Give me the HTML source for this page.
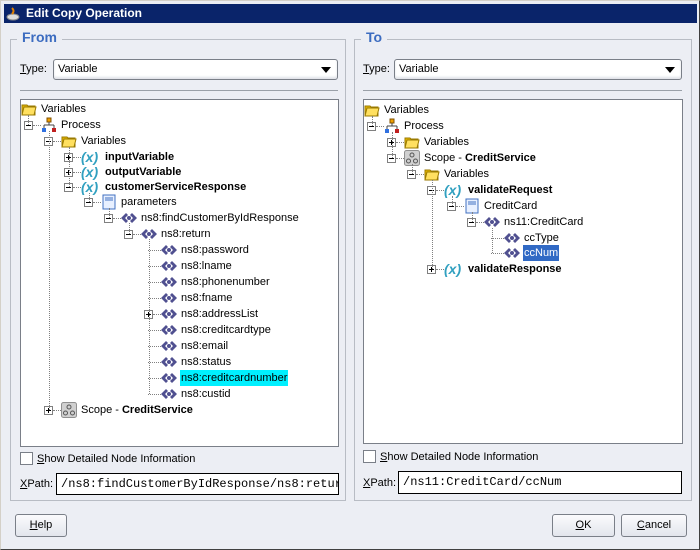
<!DOCTYPE html>
<html><head><meta charset="utf-8"><style>
*{box-sizing:border-box}
body{margin:0;width:700px;height:550px;overflow:hidden;background:#808080;font-family:"Liberation Sans",sans-serif;font-size:11px;color:#000}
#win{position:absolute;left:0;top:0;width:700px;height:550px;background:#eceef4;border:1px solid #d4d0c8;border-right-color:#404040;border-bottom-color:#404040}
#title{position:absolute;left:3px;top:3px;width:693px;height:19px;background:#0a246a;color:#fff;font-weight:bold;font-size:12px;line-height:19px;padding-left:22px}
.grp{position:absolute;border:1px solid #b8bcc4}
.gt{position:absolute;background:#eceef4;color:#3c6cc0;font-weight:bold;font-size:14px;padding:0 5px;top:-11px;left:6px}
.lbl{position:absolute}
.combo{position:absolute;height:21px;background:#fff;border:1px solid #7a7f88;border-radius:3px;padding-left:4px;line-height:19px;box-shadow:inset 0 -2px 2px #e0e2e8}
.combo:after{content:"";position:absolute;right:6px;top:7px;border:5px solid transparent;border-top:6px solid #000}
.sep{position:absolute;height:1px;background:#9aa0a8}
.tree{position:absolute;background:#fff;border:1px solid #7a7f88}
.row{position:absolute;height:16px;line-height:16px;white-space:nowrap}
.row svg{position:absolute;left:0;top:0}
.row span{position:absolute;left:19px;top:0;padding:0 1px}
.exp{position:absolute;width:9px;height:9px;border:1px solid #808080;background:#fff;font-size:9px}
.exp:before{content:"";position:absolute;left:1px;top:3px;width:5px;height:1px;background:#000}
.exp.p:after{content:"";position:absolute;left:3px;top:1px;width:1px;height:5px;background:#000}
.hd{position:absolute;border-top:1px dotted #808080;height:0}
.vd{position:absolute;border-left:1px dotted #808080;width:0}
.cb{position:absolute;width:13px;height:13px;background:#fff;border:1px solid #7a7f88}
.field{position:absolute;background:#fff;border:1px solid #000;font-family:"Liberation Mono",monospace;font-size:12px;line-height:20px;padding-left:4px;overflow:hidden;white-space:nowrap}
.btn{position:absolute;height:23px;border:1px solid #7a7f88;border-radius:3px;background:linear-gradient(#fbfbfd,#e2e5ec);text-align:center;line-height:21px}
u{text-decoration:underline}
</style></head><body>
<svg width="0" height="0" style="position:absolute">
<defs>
<symbol id="fold" viewBox="0 0 16 16"><path d="M1 4h5l1 1h7v9H1z" fill="#e8b800" stroke="#9a7a00"/><path d="M3 6h12l-2 8H1z" fill="#ffe060" stroke="#9a7a00"/></symbol>
<symbol id="proc" viewBox="0 0 16 16"><rect x="6" y="1" width="4" height="4" fill="#f0a000" stroke="#805000"/><path d="M8 5v3M3 8h10M3 8v3M13 8v3" stroke="#444" fill="none"/><rect x="1" y="11" width="4" height="4" fill="#3070e0"/><rect x="11" y="11" width="4" height="4" fill="#c02020"/></symbol>
<symbol id="var" viewBox="0 0 20 16"><text x="0" y="13" font-family="Liberation Sans" font-style="italic" font-weight="bold" font-size="14" fill="#30a0c0">(x)</text></symbol>
<symbol id="doc" viewBox="0 0 16 16"><rect x="2" y="1" width="12" height="14" fill="#e8f0ff" stroke="#4070c0"/><path d="M4 4h8M4 6h8" stroke="#4070c0"/></symbol>
<symbol id="el" viewBox="0 0 16 16"><path d="M0 8l5-5 2 2-3 3 3 3-2 2zM16 8l-5-5-2 2 3 3-3 3 2 2z" fill="#505090"/><circle cx="8" cy="8" r="2" fill="#505090"/></symbol>
<symbol id="scope" viewBox="0 0 16 16"><rect x="0.5" y="0.5" width="15" height="15" rx="2" fill="#d0d0d0" stroke="#909090"/><circle cx="8" cy="5" r="2" fill="none" stroke="#555"/><circle cx="4.5" cy="11" r="2" fill="none" stroke="#555"/><circle cx="11.5" cy="11" r="2" fill="none" stroke="#555"/></symbol>
</defs></svg>
<div id="win">
<div id="title">Edit Copy Operation</div>
<svg style="position:absolute;left:5px;top:5px" width="15" height="15"><ellipse cx="7" cy="11" rx="6" ry="3" fill="#ddd" stroke="#888"/><path d="M6 2q3 3 0 6" stroke="#e08000" fill="none" stroke-width="2"/></svg>

<div class="grp" style="left:9px;top:38px;width:336px;height:462px"><div class="gt">From</div></div>
<div class="grp" style="left:353px;top:38px;width:338px;height:462px"><div class="gt">To</div></div>

<div class="lbl" style="left:19px;top:62px"><u>T</u>ype:</div>
<div class="combo" style="left:52px;top:58px;width:285px">Variable</div>
<div class="lbl" style="left:362px;top:62px"><u>T</u>ype:</div>
<div class="combo" style="left:393px;top:58px;width:288px">Variable</div>
<div class="sep" style="left:19px;top:89px;width:318px"></div>
<div class="sep" style="left:362px;top:89px;width:319px"></div>

<div class="tree" style="left:19px;top:98px;width:319px;height:348px"></div>
<div class="tree" style="left:362px;top:98px;width:320px;height:345px"></div>

<div id="rows"></div>

<div class="cb" style="left:19px;top:451px"></div>
<div class="lbl" style="left:36px;top:452px"><u>S</u>how Detailed Node Information</div>
<div class="lbl" style="left:19px;top:477px"><u>X</u>Path:</div>
<div class="field" style="left:55px;top:472px;width:283px;height:22px">/ns8:findCustomerByIdResponse/ns8:return</div>
<div class="cb" style="left:362px;top:449px"></div>
<div class="lbl" style="left:379px;top:450px"><u>S</u>how Detailed Node Information</div>
<div class="lbl" style="left:362px;top:476px"><u>X</u>Path:</div>
<div class="field" style="left:397px;top:470px;width:284px;height:23px">/ns11:CreditCard/ccNum</div>

<div class="btn" style="left:14px;top:513px;width:52px"><u>H</u>elp</div>
<div class="btn" style="left:551px;top:513px;width:63px"><u>O</u>K</div>
<div class="btn" style="left:620px;top:513px;width:66px"><u>C</u>ancel</div>
</div>
<script>
var L=[[0,108,'fold','Variables',''],[1,124,'proc','Process','m'],[2,140,'fold','Variables','m'],[3,156,'var','<b>inputVariable</b>','p'],[3,171,'var','<b>outputVariable</b>','p'],[3,186,'var','<b>customerServiceResponse</b>','m'],[4,201,'doc','parameters','m'],[5,217,'el','ns8:findCustomerByIdResponse','m'],[6,233,'el','ns8:return','m'],[7,249,'el','ns8:password',''],[7,265,'el','ns8:lname',''],[7,281,'el','ns8:phonenumber',''],[7,297,'el','ns8:fname',''],[7,313,'el','ns8:addressList','p'],[7,329,'el','ns8:creditcardtype',''],[7,345,'el','ns8:email',''],[7,361,'el','ns8:status',''],[7,377,'el','ns8:creditcardnumber','','#00f0ff','#000'],[7,393,'el','ns8:custid',''],[2,409,'scope','Scope - <b>CreditService</b>','p']];
var R=[[0,109,'fold','Variables',''],[1,125,'proc','Process','m'],[2,141,'fold','Variables','p'],[2,157,'scope','Scope - <b>CreditService</b>','m'],[3,173,'fold','Variables','m'],[4,189,'var','<b>validateRequest</b>','m'],[5,205,'doc','CreditCard','m'],[6,221,'el','ns11:CreditCard','m'],[7,237,'el','ccType',''],[7,252,'el','ccNum','','#316ac5','#fff'],[4,268,'var','<b>validateResponse</b>','p']];
var h='';
function go(a,bx){a.forEach(function(r){var x=bx+20*r[0],y=r[1]-8;
if(r[4])h+='<div class="exp '+r[4]+'" style="left:'+(x-17)+'px;top:'+(y+4)+'px"></div><div class="hd" style="left:'+(x-8)+'px;top:'+(y+8)+'px;width:8px"></div>';
else if(r[0]>0)h+='<div class="hd" style="left:'+(x-13)+'px;top:'+(y+8)+'px;width:13px"></div>';
var w=r[2]=='var'?20:16;
h+='<div class="row" style="left:'+x+'px;top:'+y+'px"><svg width="'+w+'" height="16"><use href="#'+r[2]+'"/></svg><span style="left:'+(w+3)+'px;'+(r[5]?'background:'+r[5]+';color:'+r[6]:'')+'">'+r[3]+'</span></div>';});}
go(L,20);go(R,363);
var V=[[27,114,124],[48,130,409],[68,146,186],[88,192,201],[108,207,217],[128,222,233],[148,238,393],[371,115,125],[391,131,157],[411,163,173],[431,179,268],[451,195,205],[471,211,221],[491,227,252]];
V.forEach(function(v){h+='<div class="vd" style="left:'+v[0]+'px;top:'+v[1]+'px;height:'+(v[2]-v[1])+'px"></div>';});
document.getElementById('rows').innerHTML=h;
</script>
</body></html>
